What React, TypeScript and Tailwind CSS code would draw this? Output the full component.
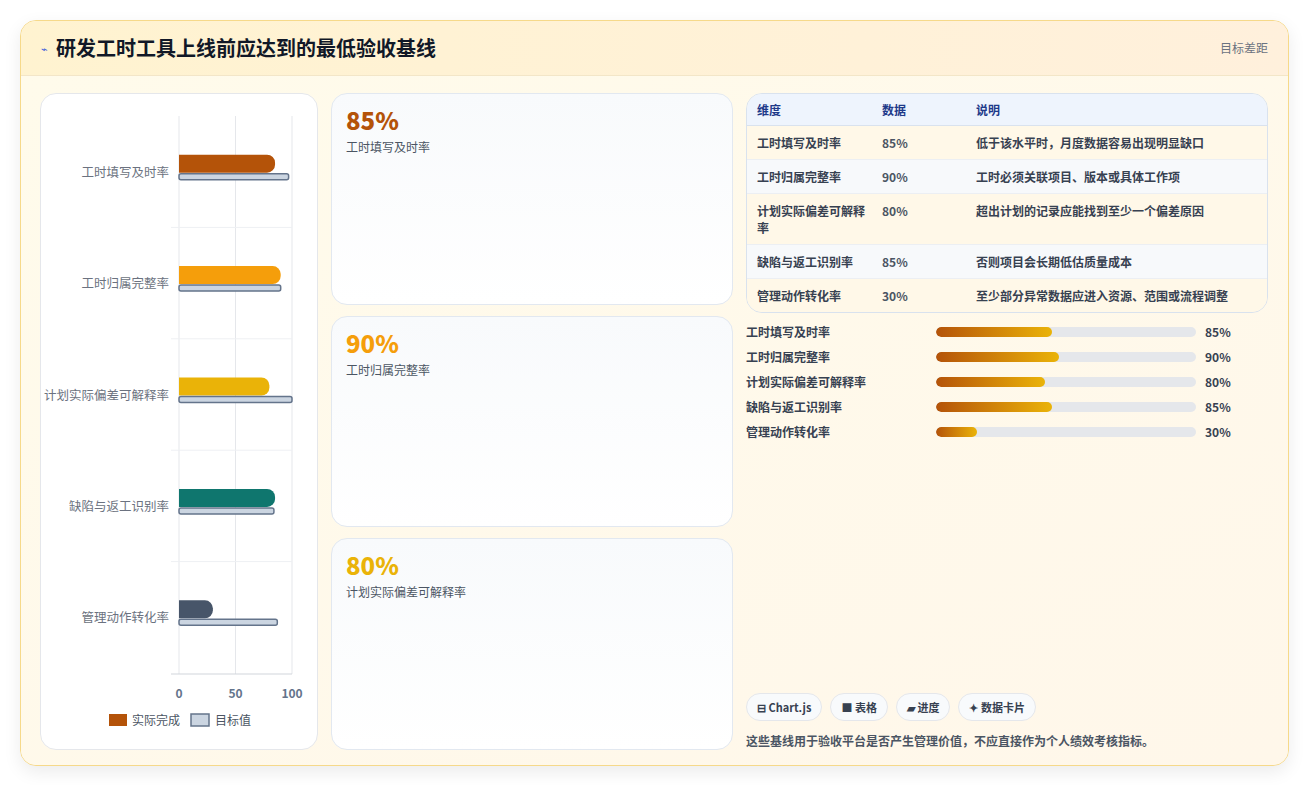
import React from "react";

const font = { fontFamily: '"Noto Sans CJK SC", "Noto Sans", sans-serif' };

const rows = [
  { name: "工时填写及时率", v: 85, t: 97, color: "#b45309", note: "低于该水平时，月度数据容易出现明显缺口" },
  { name: "工时归属完整率", v: 90, t: 90, color: "#f59e0b", note: "工时必须关联项目、版本或具体工作项" },
  { name: "计划实际偏差可解释率", v: 80, t: 100, color: "#eab308", note: "超出计划的记录应能找到至少一个偏差原因" },
  { name: "缺陷与返工识别率", v: 85, t: 84, color: "#0f766e", note: "否则项目会长期低估质量成本" },
  { name: "管理动作转化率", v: 30, t: 87, color: "#475569", note: "至少部分异常数据应进入资源、范围或流程调整" },
];

function Chart() {
  const x0 = 138, w = 113, top = 22, rowH = 111.4;
  return (
    <svg width="277" height="655" className="block">
      {[0, 50, 100].map((t) => (
        <line key={t} x1={x0 + (w * t) / 100} x2={x0 + (w * t) / 100} y1={top} y2={580} stroke="#e5e7eb" />
      ))}
      {[1, 2, 3, 4].map((i) => (
        <line key={i} x1={130} x2={x0 + w} y1={top + rowH * i} y2={top + rowH * i} stroke="#eef0f3" />
      ))}
      <line x1={130} x2={x0 + w} y1={580} y2={580} stroke="#d1d5db" />
      {rows.map((r, i) => {
        const cy = top + rowH * i + rowH / 2;
        const bw = (w * r.v) / 100;
        return (
          <g key={r.name}>
            <text x={128} y={cy + 5} textAnchor="end" fontSize="12.5" fill="#6b7280" style={font}>{r.name}</text>
            <path d={`M${x0} ${cy - 17} H${x0 + bw - 8} a8 8 0 0 1 8 8 v2 a8 8 0 0 1 -8 8 H${x0} Z`} fill={r.color} />
            <rect x={x0} y={cy + 2} width={(w * r.t) / 100} height={6} rx={2} fill="#cbd5e1" stroke="#64748b" strokeWidth="1.5" />
          </g>
        );
      })}
      {[0, 50, 100].map((t) => (
        <text key={t} x={x0 + (w * t) / 100} y={604} textAnchor="middle" fontSize="12" fontWeight="bold" fill="#64748b" style={font}>{t}</text>
      ))}
      <rect x={68} y={620} width={18} height={12} fill="#b45309" />
      <text x={91} y={631} fontSize="12" fill="#4b5563" style={font}>实际完成</text>
      <rect x={150} y={620} width={18} height={12} fill="#cbd5e1" stroke="#64748b" strokeWidth="1.5" />
      <text x={174} y={631} fontSize="12" fill="#4b5563" style={font}>目标值</text>
    </svg>
  );
}

export default function App() {
  return (
    <div className="w-[1309px] h-[785px] bg-white p-5" style={font}>
      <div className="h-[746px] rounded-2xl border border-[#f6d98a] bg-[#fffaf0] shadow-[0_6px_18px_rgba(0,0,0,0.08)] overflow-hidden flex flex-col">
        <div className="h-[55px] shrink-0 flex items-center justify-between px-5 bg-gradient-to-r from-[#fff3d0] to-[#fff0dc] border-b border-[#f3e6c8]">
          <div className="flex items-center gap-2">
            <span className="text-[11px] text-[#3b5bdb]">⌁</span>
            <span className="text-[20px] font-bold text-[#111827]">研发工时工具上线前应达到的最低验收基线</span>
          </div>
          <span className="text-[12px] text-[#6b7280]">目标差距</span>
        </div>
        <div className="flex-1 flex gap-[13px] pl-[19px] pr-5 pt-[17px] pb-[18px] bg-gradient-to-br from-[#fffbeb] to-[#fff7ea]">
          <div className="w-[278px] rounded-2xl border border-[#e5e7eb] bg-white overflow-hidden">
            <Chart />
          </div>
          <div className="w-[402px] flex flex-col gap-[11px]">
            {rows.slice(0, 3).map((r) => (
              <div key={r.name} className="flex-1 rounded-2xl border border-[#e2e8f0] bg-gradient-to-b from-[#f8fafc] to-white px-[14px] pt-2">
                <div className="text-[24px] font-extrabold leading-[36px]" style={{ color: r.color }}>{r.v}%</div>
                <div className="text-[12px] text-[#4b5563]">{r.name}</div>
              </div>
            ))}
          </div>
          <div className="flex-1 flex flex-col">
            <div className="rounded-2xl border border-[#d9e2ee] overflow-hidden text-[12px] font-semibold text-[#374151]">
              <div className="flex bg-[#eef4fd] h-[32px] items-center px-[10px] text-[#1e3a8a] border-b border-[#d9e2ee]">
                <div className="w-[125px]">维度</div>
                <div className="w-[94px]">数据</div>
                <div>说明</div>
              </div>
              {rows.map((r, i) => (
                <div key={r.name} className={`flex px-[10px] py-[8px] leading-[17px] ${i % 2 ? "bg-[#f7f9fb]" : "bg-[#fff8e8]"} ${i < 4 ? "border-b border-[#eceff3]" : ""}`}>
                  <div className="w-[125px] pr-4">{r.name}</div>
                  <div className="w-[94px] text-[#4b5563]">{r.v}%</div>
                  <div className="flex-1">{r.note}</div>
                </div>
              ))}
            </div>
            <div className="mt-[11px] flex flex-col gap-[9px] text-[12px] font-semibold text-[#374151]">
              {rows.map((r) => (
                <div key={r.name} className="flex items-center h-[16px]">
                  <div className="w-[190px]">{r.name}</div>
                  <div className="w-[260px] h-[10px] rounded-full bg-[#e5e7eb] overflow-hidden">
                    <div className="h-full rounded-full bg-gradient-to-r from-[#b45309] to-[#eab308]" style={{ width: `${r.v * 0.525}%` }} />
                  </div>
                  <div className="ml-[9px] font-bold">{r.v}%</div>
                </div>
              ))}
            </div>
            <div className="mt-auto flex gap-2 text-[11px] font-semibold text-[#374151]">
              {["⊟ Chart.js", "■ 表格", "▰ 进度", "✦ 数据卡片"].map((c) => (
                <span key={c} className="px-[10px] h-[28px] flex items-center rounded-full border border-[#e5e7eb] bg-[#f8fafc]">{c}</span>
              ))}
            </div>
            <div className="mt-[11px] text-[12px] font-semibold text-[#4b5563]">这些基线用于验收平台是否产生管理价值，不应直接作为个人绩效考核指标。</div>
          </div>
        </div>
      </div>
    </div>
  );
}
